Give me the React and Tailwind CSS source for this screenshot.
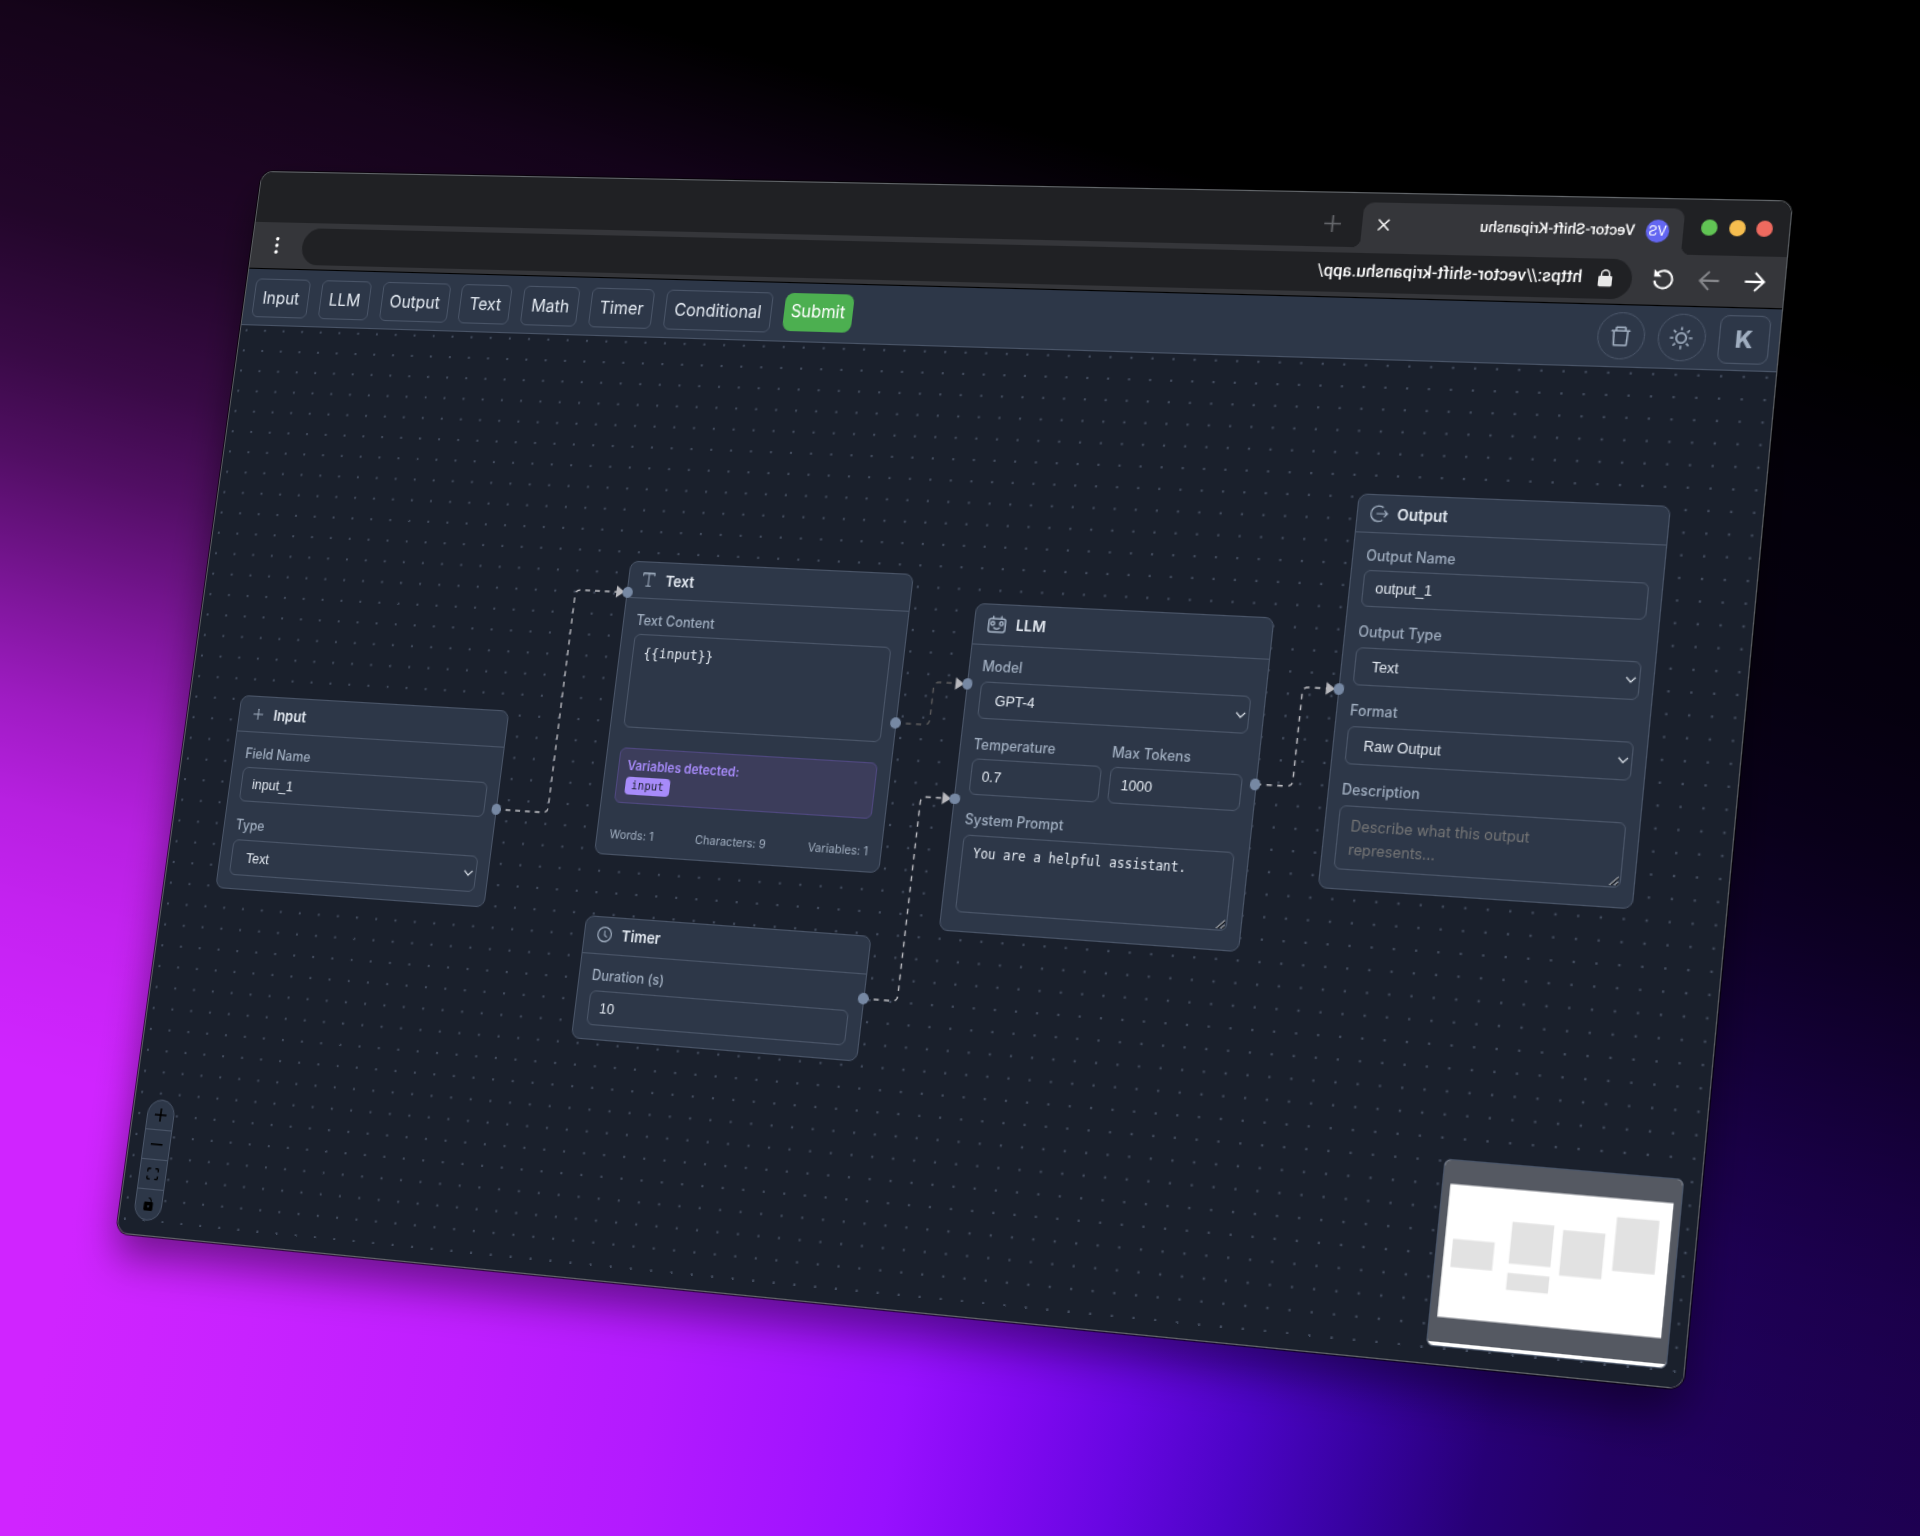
import { AiOutlineClockCircle, AiOutlineDelete, AiOutlinePlus, AiOutlineSun } from "react-icons/ai";

const label = "text-[12.4px] font-medium leading-4 text-[#a0aec0]";
const field =
  "mt-[4.8px] flex w-full items-center rounded-[6px] border border-[#4a5568] font-['Liberation_Sans',sans-serif] text-[12.8px] text-[#e2e8f0]";

function Label({ children }) {
  return <div className={label}>{children}</div>;
}

function Field({ name, value }) {
  return (
    <div>
      <Label>{name}</Label>
      <div className={`${field} h-[31.4px] px-[10px]`}>{value}</div>
    </div>
  );
}

function Select({ name, value }) {
  return (
    <div>
      <Label>{name}</Label>
      <div className={`${field} h-[33px] justify-between pl-[14px] pr-[2px]`}>
        {value}
        <svg className="h-[10px] w-[10px]" viewBox="0 0 10 10" fill="none" stroke="#e2e8f0" strokeWidth="1.1">
          <path d="M1 2.8 5 7l4-4.2" />
        </svg>
      </div>
    </div>
  );
}

function Grip() {
  return (
    <svg className="absolute bottom-[1px] right-[1px] h-[8px] w-[8px]" viewBox="0 0 8 8" fill="none" strokeWidth="1">
      <path d="M.5 8 8 .5M4.5 8 8 4.5" stroke="#111" transform="translate(.7 .7)" />
      <path d="M.5 8 8 .5M4.5 8 8 4.5" stroke="#d8d8d8" />
    </svg>
  );
}

function Node({ place, icon, title, header = "h-[33px]", children }) {
  return (
    <section className={`absolute w-[271.6px] rounded-[8px] border border-[#4a5568] bg-[#2d3748] ${place}`}>
      <header className={`flex items-center gap-[8px] border-b border-[#4a5568] pb-px pl-[11px] text-[13.4px] font-semibold text-[#e2e8f0] ${header}`}>
        <span className="text-[#a0aec0]">{icon}</span>
        {title}
      </header>
      <div className="flex flex-col gap-[14.3px] px-[11.5px] pt-[11.4px]">{children}</div>
    </section>
  );
}

function SerifT() {
  return (
    <svg className="h-[15px] w-[16px]" viewBox="0 0 16 15" fill="none" stroke="currentColor">
      <path d="M2.6 4.3V1.5h10.8v2.8" strokeWidth="1" />
      <path d="M2.6 2.3h10.8" strokeWidth="2" opacity=".55" />
      <path d="M8 1.5v12M5.4 13.4h5.2" strokeWidth="1" />
    </svg>
  );
}

function RobotFace() {
  return (
    <svg className="h-[19px] w-[19px]" viewBox="0 0 19 19" fill="none" stroke="currentColor" strokeWidth="1.5" strokeLinecap="round">
      <rect x="1.8" y="4.2" width="15.4" height="11.8" rx="2.2" />
      <path d="M5.7 4.2V2.2M13.3 4.2V2.2M7 12.4q2.5 1.9 5 0" />
      <circle cx="5.5" cy="8.4" r="1.6" />
      <circle cx="13.5" cy="8.4" r="1.6" />
    </svg>
  );
}

function CircleExit() {
  return (
    <svg className="h-4 w-4" viewBox="0 0 16 16" fill="none" stroke="currentColor" strokeWidth="1.2">
      <path d="M11.3 2.6A6.7 6.7 0 1 0 11.3 13.4M5.5 8H15M12.3 5.2 15.1 8l-2.8 2.8" />
    </svg>
  );
}

function Handle({ place }) {
  return <i className={`absolute -ml-[4.8px] -mt-[4.8px] h-[9.6px] w-[9.6px] rounded-full bg-[#7688a3] ${place}`} />;
}

function Canvas() {
  return (
    <main className="relative flex-1 overflow-hidden bg-[#1a202c]">
      <svg className="absolute inset-0 h-full w-full">
        <defs>
          <pattern id="dots" x="-3.64" y="-4.9" width="19.277" height="19.24" patternUnits="userSpaceOnUse">
            <circle cx="9.64" cy="9.62" r="1" fill="#505b6f" />
          </pattern>
        </defs>
        <rect width="100%" height="100%" fill="url(#dots)" />
      </svg>
      <svg className="absolute left-0 -top-[147px] h-[993px] w-[1440px]" fill="none" stroke="#bdbdc2" strokeWidth="1.35" strokeDasharray="4.8 4.8">
        <path d="M322 584H368q5 0 5-5V386q0-5 5-5H415" />
        <path d="M694 485H720.5q5 0 5-5V452q0-5 5-5H748" stroke="#5c5b5c" />
        <path d="M694 728H720.5q5 0 5-5V553.5q0-5 5-5H748" />
        <path d="M1027 519.7H1054.5q5 0 5-5V439q0-5 5-5H1083" />
        <g fill="#b8b8bd" stroke="none">
          <path d="M413 375.3v11l8-5.5zM745.5 441.7v11l8-5.5zM745.5 543v11l8-5.5zM1080.2 428.5v11l8-5.5z" />
        </g>
      </svg>

      <Node place="left-[51.7px] top-[347.2px] h-[178.4px]" icon={<AiOutlinePlus className="h-4 w-4 p-[1px]" />} title="Input">
        <Field name="Field Name" value="input_1" />
        <Select name="Type" value="Text" />
      </Node>

      <Node place="left-[423.3px] top-[205.2px] h-[265.6px]" icon={<SerifT />} title="Text">
        <div>
          <Label>Text Content</Label>
          <div className="mt-[4.8px] h-[84.8px] rounded-[6px] border border-[#4a5568] px-[10px] pt-[6.6px] font-['DejaVu_Sans_Mono',monospace] text-[12.45px] leading-[17px] text-[#e2e8f0]">
            {"{{input}}"}
          </div>
          <div className="mt-[18px] h-[50px] rounded-[6px] border border-[#4f4880] bg-[#3c3d5b] px-[8px] pt-[5.6px]">
            <div className="text-[11.5px] font-semibold leading-[18px] text-[#a78bfa]">Variables detected:</div>
            <span className="mt-[.8px] flex h-[16px] w-[43.5px] items-center justify-center rounded-[4px] bg-[#a78bfa] font-['DejaVu_Sans_Mono',monospace] text-[10.45px] text-[#1a202c]">
              input
            </span>
          </div>
          <div className="mt-[21px] flex justify-between text-[10.6px] leading-[15px] text-[#a0aec0]">
            <span>Words: 1</span>
            <span>Characters: 9</span>
            <span>Variables: 1</span>
          </div>
        </div>
      </Node>

      <Node place="left-[423.3px] top-[526.4px] h-[110px]" header="h-[32.2px]" icon={<AiOutlineClockCircle className="h-4 w-4" />} title="Timer">
        <Field name="Duration (s)" value="10" />
      </Node>

      <Node place="left-[756px] top-[228.2px] h-[288.8px]" header="h-[35.9px]" icon={<RobotFace />} title="LLM">
        <Select name="Model" value="GPT-4" />
        <div className="grid grid-cols-2 gap-[7.7px]">
          <Field name="Temperature" value="0.7" />
          <Field name="Max Tokens" value="1000" />
        </div>
        <div>
          <Label>System Prompt</Label>
          <div className="relative mt-[4.8px] h-[68.2px] rounded-[6px] border border-[#4a5568] px-[10px] pt-[7.6px] font-['DejaVu_Sans_Mono',monospace] text-[11.5px] leading-[16px] text-[#e2e8f0]">
            You are a helpful assistant.
            <Grip />
          </div>
        </div>
      </Node>

      <Node place="left-[1090.8px] top-[117.2px] h-[340.4px]" icon={<CircleExit />} title="Output">
        <Field name="Output Name" value="output_1" />
        <Select name="Output Type" value="Text" />
        <Select name="Format" value="Raw Output" />
        <div>
          <Label>Description</Label>
          <div className="relative mt-[4.8px] h-[55px] rounded-[6px] border border-[#4a5568] px-[10px] pt-[7px] text-[12.8px] leading-[20px] text-[#757575]">
            Describe what this output
            <br />
            represents...
            <Grip />
          </div>
        </div>
      </Node>

      <Handle place="left-[322.3px] top-[437px]" />
      <Handle place="left-[424px] top-[233.8px]" />
      <Handle place="left-[693.8px] top-[338px]" />
      <Handle place="left-[693.8px] top-[581px]" />
      <Handle place="left-[756.7px] top-[300.2px]" />
      <Handle place="left-[756.8px] top-[401.5px]" />
      <Handle place="left-[1026.7px] top-[372.8px]" />
      <Handle place="left-[1091.5px] top-[287px]" />

      <Controls />
      <MiniMap />
    </main>
  );
}

const controls = [
  ["0 0 32 32", "M32 18.133H18.133V32h-4.266V18.133H0v-4.266h13.867V0h4.266v13.867H32z"],
  ["0 0 32 5", "M0 0h32v4.2H0z"],
  [
    "0 0 32 30",
    "M3.692 4.63c0-.53.4-.938.939-.938h5.215V0H4.708C2.13 0 0 2.054 0 4.63v5.216h3.692V4.631zM27.354 0h-5.2v3.692h5.17c.53 0 .984.4.984.939v5.215H32V4.631A4.624 4.624 0 0027.354 0zm.954 24.83c0 .532-.4.94-.939.94h-5.215v3.768h5.215c2.577 0 4.631-2.13 4.631-4.707v-5.139h-3.692v5.139zm-23.677.94c-.531 0-.939-.4-.939-.94v-5.138H0v5.139c0 2.577 2.13 4.707 4.708 4.707h5.138V25.77H4.631z",
  ],
  [
    "0 0 25 32",
    "M21.333 10.667H19.81V7.619C19.81 3.429 16.38 0 12.19 0c-4.114 1.828-1.37 2.133.305 2.438 1.676.305 4.42 2.59 4.42 5.181v3.048H3.047A3.056 3.056 0 000 13.714v15.238A3.056 3.056 0 003.048 32h18.285a3.056 3.056 0 003.048-3.048V13.714a3.056 3.056 0 00-3.048-3.047zM12.19 24.533a3.056 3.056 0 01-3.047-3.047 3.056 3.056 0 013.047-3.048 3.056 3.056 0 013.048 3.048 3.056 3.056 0 01-3.048 3.047z",
  ],
];

function Controls() {
  return (
    <div className="absolute left-[14.4px] top-[721.9px] flex w-[27.2px] flex-col divide-y divide-[#4a5568] overflow-hidden rounded-full border border-[#4a5568] bg-[#2d3748]">
      {controls.map(([box, d]) => (
        <span key={box} className="flex h-[27px] items-center justify-center">
          <svg className="max-h-[12px] w-[12px]" viewBox={box}>
            <path d={d} />
          </svg>
        </span>
      ))}
    </div>
  );
}

function MiniMap() {
  return (
    <div className="absolute left-[1223.6px] top-[676.1px] h-[155.4px] w-[202.2px] overflow-hidden rounded-[6px] border border-[#4a5568] bg-white">
      <svg className="block h-[150px] w-full bg-[#555962]" viewBox="1224.6 824.2 200.2 150">
        <path d="M1230.8 843.7h187.9v110.1h-187.9z" fill="#fff" />
        <path
          d="M1237.7 888.8h35.4v23.2h-35.4zM1286.4 870.4h35.3v34.2h-35.3zM1329.4 873.5h35.4v37.3h-35.4zM1373.1 858.9h35.3v44.1h-35.3zM1286.3 912.5h35.4v14h-35.4z"
          fill="#e2e2e2"
        />
      </svg>
    </div>
  );
}

function BrowserChrome() {
  return (
    <div className="-scale-x-100 font-[Roboto,sans-serif] text-white">
      <div className="flex h-[47.8px] items-end bg-[#202124]">
        <div className="flex gap-[9.6px] self-start pl-[13.7px] pt-[17.3px]">
          <i className="h-[14px] w-[14px] rounded-full bg-[#ee6a5f]" />
          <i className="h-[14px] w-[14px] rounded-full bg-[#f5bd4f]" />
          <i className="h-[14px] w-[14px] rounded-full bg-[#61c454]" />
        </div>
        <div className="ml-[7px] h-[8px] w-[8px] bg-[radial-gradient(circle_at_0_0,#202124_8px,#35363a_8.4px)]" />
        <div className="flex h-[39.5px] w-[281.5px] items-center rounded-t-[9px] bg-[#35363a] pl-[12px] pr-[14px]">
          <span className="flex h-[20px] w-[20px] items-center justify-center rounded-full bg-[#6366f1] text-[12.5px]">VS</span>
          <span className="ml-[9.5px] flex-1 text-[13.2px] font-medium">Vector-Shift-Kripanshu</span>
          <svg className="h-[11.5px] w-[11.5px]" viewBox="0 0 12 12" stroke="#fff" strokeWidth="1.5">
            <path d="m1 1 10 10M11 1 1 11" />
          </svg>
        </div>
        <div className="h-[8px] w-[8px] bg-[radial-gradient(circle_at_100%_0,#202124_8px,#35363a_8.4px)]" />
        <svg className="mb-[12.5px] ml-[10.5px] h-[15px] w-[15px]" viewBox="0 0 15 15" stroke="#65676b" strokeWidth="1.7">
          <path d="M7.5 0v15M0 7.5h15" />
        </svg>
      </div>
      <div className="flex h-[45.5px] items-center border-b border-black bg-[#35363a]">
        <svg className="ml-[16px] h-[18px] w-[18px]" viewBox="0 0 18 18" fill="none" stroke="#fff" strokeWidth="1.8">
          <path d="M17.5 9H1.5M9 1.2 1.3 9 9 16.8" />
        </svg>
        <svg className="ml-[21px] h-[18px] w-[18px]" viewBox="0 0 18 18" fill="none" stroke="#85868a" strokeWidth="1.8">
          <path d="M.5 9h16M9 1.2 16.7 9 9 16.8" />
        </svg>
        <svg className="ml-[21px] h-[18px] w-[18px]" viewBox="0 0 18 18" fill="none" stroke="#fff" strokeWidth="1.8">
          <path d="M15.3 4.5A7.6 7.6 0 1 0 16.6 10" />
          <path d="M17.2 0v6.5h-6.5z" fill="#fff" stroke="none" />
        </svg>
        <div className="ml-[17.5px] flex h-[35px] w-[1258px] items-center rounded-full bg-[#202124] pl-[17px] text-[15.15px] font-medium">
          <svg className="h-[15.5px] w-[12px]" viewBox="0 0 13 16" fill="#e8e8e8">
            <path d="M1.5 6H2V4.5a4.5 4.5 0 0 1 9 0V6h.5A1.5 1.5 0 0 1 13 7.5v7a1.5 1.5 0 0 1-1.5 1.5h-10A1.5 1.5 0 0 1 0 14.5v-7A1.5 1.5 0 0 1 1.5 6zm2 0h6V4.5a3 3 0 0 0-6 0z" />
          </svg>
          <span className="-mt-[1.5px] ml-[14.5px]">https://vector-shift-kripanshu.app/</span>
        </div>
        <svg className="ml-[24px] h-[18px] w-[5px]" viewBox="0 0 5 18" fill="#fff">
          <circle cx="2.5" cy="2.8" r="1.8" />
          <circle cx="2.5" cy="9" r="1.8" />
          <circle cx="2.5" cy="15.2" r="1.8" />
        </svg>
      </div>
    </div>
  );
}

function AppBar() {
  const items = [
    ["Input", "w-[57px]"],
    ["LLM", "w-[51px]"],
    ["Output", "w-[69px]"],
    ["Text", "w-[50.5px]"],
    ["Math", "w-[56.5px]"],
    ["Timer", "w-[61.5px]"],
    ["Conditional", "w-[104px]"],
  ];
  return (
    <nav className="flex h-[53.7px] items-start border-b border-[#4a5568] bg-[#2d3748] pl-[8.8px] pr-[8.4px] text-[15.9px] text-[#e2e8f0]">
      <div className="mt-[8.6px] flex gap-[11.9px]">
        {items.map(([name, w]) => (
          <span key={name} className={`flex h-[37.5px] items-center justify-center rounded-[6px] border border-[#4a5568] ${w}`}>
            {name}
          </span>
        ))}
        <span className="flex h-[35px] w-[66px] items-center justify-center rounded-[8px] bg-[#4caf50] text-white">Submit</span>
      </div>
      <div className="ml-auto mt-[5.7px] flex items-center gap-[11.2px] text-[#a0aec0]">
        <span className="flex h-[41px] w-[41px] items-center justify-center rounded-full border border-[#4a5568]">
          <AiOutlineDelete className="h-[22px] w-[22px]" />
        </span>
        <span className="flex h-[41px] w-[41px] items-center justify-center rounded-full border border-[#4a5568]">
          <AiOutlineSun className="h-[22px] w-[22px]" />
        </span>
        <span className="flex h-[42px] w-[42.5px] items-center justify-center rounded-[8px] border border-[#4a5568] text-[20.5px] font-extrabold">
          K
        </span>
      </div>
    </nav>
  );
}

export default function App() {
  return (
    <div className="relative h-[1536px] w-[1920px] overflow-hidden bg-[linear-gradient(15deg,transparent_23%,rgba(0,0,0,.02)_26%,rgba(0,0,0,.06)_31%,rgba(0,0,0,.12)_36%,rgba(0,0,0,.24)_41%,rgba(0,0,0,.38)_45.6%,rgba(0,0,0,.49)_49%,rgba(0,0,0,.61)_53%,rgba(0,0,0,.73)_58%,rgba(0,0,0,.84)_65%,rgba(0,0,0,.9)_75%,#000_82%),linear-gradient(100deg,#d024ff_13%,#c822ff_22%,#bf1eff_32%,#b31aff_41%,#a414ff_48%,#9810ff_52.5%,#8209f2_57.5%,#6806e2_62.7%,#4c04c6_68.3%,#3702a0_73.9%,#270076_79.5%,#220062_85%,#1e0052_100%)] font-[Inter,sans-serif]">
      <div className="flex h-[992.4px] w-[1440px] origin-top-left flex-col overflow-hidden rounded-[11px] shadow-[0_0_0_.9px_#63676b,0_0_0_1.8px_rgba(0,0,0,.8),0_20px_38px_rgba(0,0,0,.45)] [transform:matrix3d(0.934354,0.0061157,0,-0.0000713174,-0.150139,1.031681,0,-0.000030131,0,0,1,0,262.5,172,0,1)]">
        <BrowserChrome />
        <AppBar />
        <Canvas />
      </div>
    </div>
  );
}
